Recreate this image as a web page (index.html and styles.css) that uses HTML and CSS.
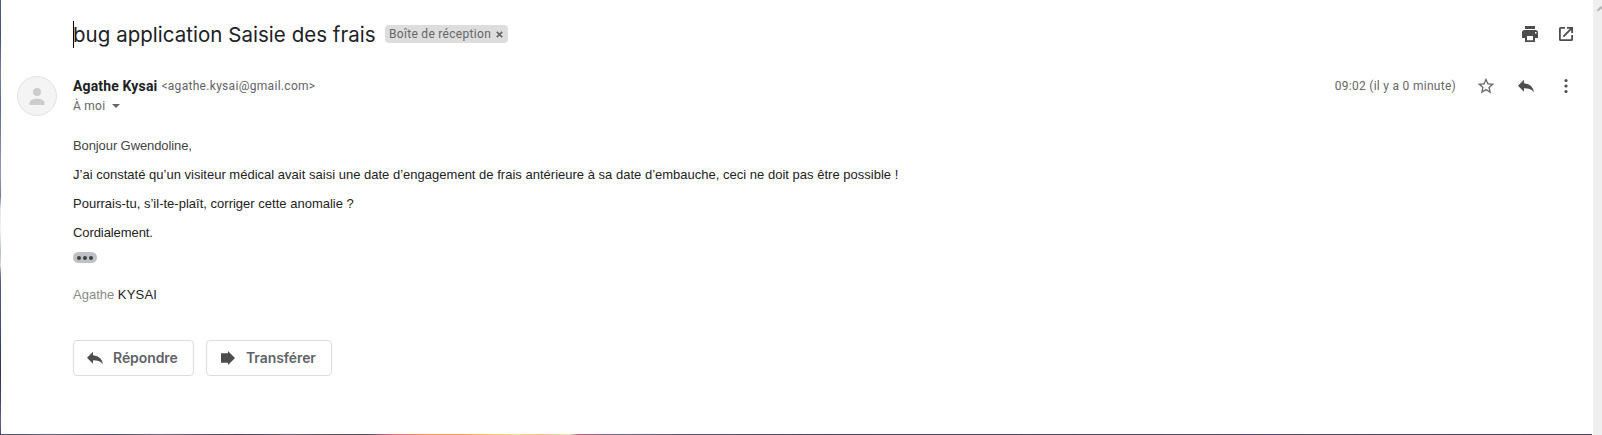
FILE: index.html
```html
<!DOCTYPE html>
<html lang="fr">
<head>
<meta charset="utf-8">
<title>bug application Saisie des frais</title>
<link rel="stylesheet" href="styles.css">
</head>
<body>
<div class="window">
  <div class="edge-left"></div>
  <main class="mail">
    <header class="subject-row">
      <div class="subject"><span class="caret"></span><h1 class="subject-text">bug application Saisie des frais</h1></div>
      <div class="label"><span class="label-name">Boîte de réception</span>
        <svg class="label-close" viewBox="0 0 7 7"><path d="M.8.800l5.400 5.400M6.200.800L.8 6.200" stroke="#666" stroke-width="1.700"/></svg>
      </div>
      <div class="actions">
        <svg class="icon" viewBox="0 0 20 20" fill="#4d4d4d"><path d="M5 2h10v3H5zM4.500 6h11A2.500 2.500 0 0 1 18 8.500V14h-3v4H5v-4H2V8.500A2.500 2.500 0 0 1 4.500 6zM7 12v4.200h6V12zM15 8v1.500h1.500V8z" fill-rule="evenodd"/></svg>
        <svg class="icon" viewBox="0 0 20 20" fill="#4d4d4d"><path d="M15.200 15.200H4.800V4.800H9V3H4.500A1.500 1.500 0 0 0 3 4.500v11A1.500 1.500 0 0 0 4.500 17h11a1.500 1.500 0 0 0 1.500-1.500V11h-1.800zM11 3v1.800h2.900l-7.200 7.200 1.300 1.300 7.200-7.200V9H17V3z"/></svg>
      </div>
    </header>

    <section class="sender-row">
      <div class="avatar">
        <svg class="avatar-icon" viewBox="0 0 16 17" fill="#ccc"><circle cx="8" cy="4" r="4"/><path d="M.500 17v-2.200C.500 12 5 10.800 8 10.800s7.500 1.200 7.500 4V17z"/></svg>
      </div>
      <div class="sender">
        <div class="sender-line"><span class="name">Agathe Kysai</span><span class="email">&lt;agathe.kysai@gmail.com&gt;</span></div>
        <div class="recipient"><span>À moi</span><span class="arrow-down"></span></div>
      </div>
      <div class="meta">
        <span class="time">09:02 (il y a 0 minute)</span>
        <svg class="icon" viewBox="0 0 24 24" fill="#6b6b6b"><path d="M22 9.240l-7.190-.620L12 2 9.190 8.630 2 9.240l5.460 4.730L5.820 21 12 17.270 18.180 21l-1.630-7.030L22 9.240zM12 15.400l-3.760 2.270 1-4.280-3.320-2.880 4.380-.380L12 6.100l1.710 4.040 4.380.380-3.320 2.880 1 4.280L12 15.400z"/></svg>
        <svg class="icon" viewBox="0 0 20 20" fill="#4d4d4d"><path d="M8 7.200V3.800L2 9.800l6 6v-3.500c4.200 0 7.700.9 10 4C17.400 11.800 14.500 7.800 8 7.200z"/></svg>
        <svg class="icon" viewBox="0 0 20 20" fill="#4d4d4d"><circle cx="10" cy="4.500" r="1.550"/><circle cx="10" cy="10" r="1.550"/><circle cx="10" cy="15.500" r="1.550"/></svg>
      </div>
    </section>

    <article class="body">
      <p class="line greeting">Bonjour Gwendoline,</p>
      <p class="line">J’ai constaté qu’un visiteur médical avait saisi une date d’engagement de frais antérieure à sa date d’embauche, ceci ne doit pas être possible !</p>
      <p class="line">Pourrais-tu, s’il-te-plaît, corriger cette anomalie ?</p>
      <p class="line closing">Cordialement.</p>
      <div class="more"><i class="dot"></i><i class="dot"></i><i class="dot"></i></div>
      <p class="signature"><span class="first-name">Agathe</span> <span class="last-name">KYSAI</span></p>
    </article>

    <footer class="buttons">
      <button class="button reply"><svg class="icon" viewBox="0 0 20 20" fill="#4d4d4d"><path d="M8 7.200V3.800L2 9.800l6 6v-3.500c4.200 0 7.700.9 10 4C17.400 11.800 14.500 7.800 8 7.200z"/></svg><span>Répondre</span></button>
      <button class="button forward"><svg class="icon" viewBox="0 0 20 20" fill="#4d4d4d"><path d="M3 5.200h7V3l7 7-7 7v-2.200H3z"/></svg><span>Transférer</span></button>
    </footer>
  </main>
  <aside class="scrollbar"><svg class="scroll-arrow" viewBox="0 0 5 7"><path d="M.3 6L3.800 2.300L7.300 6" fill="none" stroke="#b4b4b4" stroke-width="1.900"/></svg></aside>
  <div class="edge-bottom"></div>
</div>
</body>
</html>
```
FILE: styles.css
```css
* { box-sizing: border-box; }
body { margin: 0; background: #fff; font-family: Roboto, "Liberation Sans", sans-serif; color: #222; overflow: hidden; }
h1, p { margin: 0; }
.window { display: grid; grid-template-columns: 1px 1591px 1px 9px; grid-template-rows: 434px 1px; width: 1602px; height: 435px; }
.edge-left { grid-row: 1 / 3; background: linear-gradient(#525c87 0, #464f7c 8%, #7a80aa 17%, #606998 24%, #959cbc 40%, #737b9c 45%, #dfe3e9 48%, #eff0f3 53%, #b5bec6 58%, #d3d9e0 61%, #747b9a 63%, #525987 65%, #424c7b 75%, #2e3356 85%, #424570 92%, #62609a 97%, #4a4371 100%); }
.edge-bottom { grid-column: 2; grid-row: 2; background: linear-gradient(90deg, #4d4a75 0, #625f8d 3%, #504d7c 7%, #796189 10%, #4a3d67 15%, #6e587e 18%, #594268 23%, #de6c7b 24.500%, #fb9964 27%, #fb9964 29%, #f4bd67 30.500%, #ffdc9c 32.500%, #f5bd8f 34%, #fce2b7 35.700%, #b1677b 36.300%, #796093 39%, #5d5182 43%, #4d426f 52%, #544779 80%, #4b3d66 100%); }
.mail { grid-column: 2; grid-row: 1; display: flex; flex-direction: column; }
.scrollbar { grid-column: 4; grid-row: 1 / 3; background: #efefef; padding: 5px 0 0 4px; }
.scroll-arrow { display: block; width: 5px; height: 7px; }

.icon { display: block; width: 20px; height: 20px; flex: none; }

.subject-row { display: flex; align-items: center; height: 68px; padding: 0 16px 0 72px; }
.subject { display: flex; align-items: center; width: 312px; }
.caret { width: 1px; height: 27px; margin-right: -1px; background: #000; }
.subject-text { padding-top: 2px; font: 400 20.5px/28px Inter, Roboto, sans-serif; letter-spacing: .03px; white-space: nowrap; color: #202124; }
.label { display: flex; align-items: center; width: 123px; height: 18px; padding-left: 4px; border-radius: 4px; background: #ddd; color: #666; font-size: 12px; line-height: 18px; }
.label-name { width: 107px; letter-spacing: .3px; white-space: nowrap; }
.label-close { width: 7px; height: 7px; margin-top: 1px; }
.actions { display: flex; gap: 16px; margin-left: auto; }

.sender-row { display: flex; height: 66px; padding: 8px 16px 0; }
.avatar { display: flex; justify-content: center; width: 40px; height: 40px; padding-top: 11px; border: 1px solid #e2e2e2; border-radius: 50%; background: #f4f4f4; }
.avatar-icon { width: 16px; height: 17px; }
.sender { margin-left: 16px; }
.sender-line { display: flex; align-items: center; gap: 4px; height: 20px; white-space: nowrap; }
.name { font-size: 14px; font-weight: 700; letter-spacing: .15px; color: #202124; }
.email { font-size: 12px; letter-spacing: .3px; color: #5f6368; }
.recipient { display: flex; align-items: center; gap: 7px; height: 20px; font-size: 12px; letter-spacing: .25px; color: #666; }
.arrow-down { border: 4px solid transparent; border-top-color: #666; border-bottom: 0; }
.meta { display: flex; align-items: center; gap: 20px; height: 20px; margin-left: auto; }
.time { font-size: 12px; letter-spacing: .28px; color: #666; }

.body { display: flex; flex-direction: column; height: 206px; padding-left: 72px; font-family: "Liberation Sans", Arial, sans-serif; font-size: 13px; }
.line { height: 29px; line-height: 23px; letter-spacing: .01px; white-space: nowrap; }
.greeting { color: #444; letter-spacing: -.1px; }
.closing { letter-spacing: -.08px; }
.more { display: flex; align-items: center; justify-content: center; gap: 2px; width: 24px; height: 11px; margin-top: 2px; border-radius: 6px; background: #bdc1c6; }
.dot { width: 4px; height: 4px; border-radius: 50%; background: #3c4043; }
.signature { margin-top: 20px; line-height: 23px; }
.first-name { color: #888; }
.last-name { letter-spacing: .2px; }

.buttons { display: flex; gap: 12px; padding-left: 72px; }
.button { display: flex; align-items: center; height: 36px; padding: 0 0 0 11px; border: 1px solid #dadce0; border-radius: 4px; background: #fff; color: #5f6368; font: 600 14px/20px Inter, Roboto, sans-serif; letter-spacing: -.08px; }
.button span { margin-left: 8px; }
.reply { width: 121px; }
.forward { width: 126px; }
```
